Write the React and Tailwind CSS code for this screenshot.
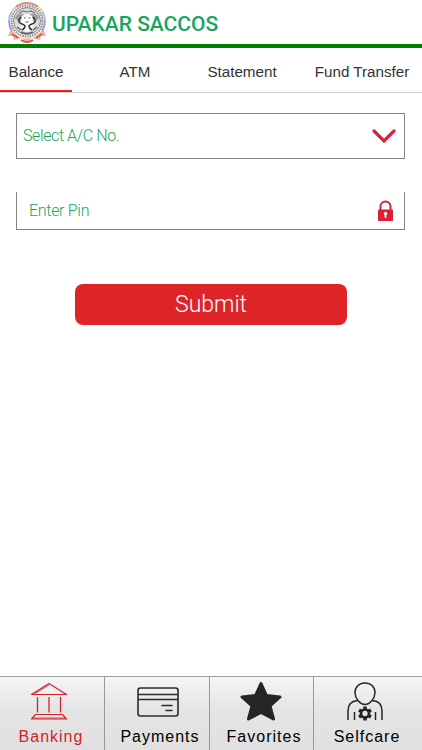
import { useState } from "react"

const tabs = [
  { name: "Balance", className: "w-[72px]" },
  { name: "ATM", className: "w-[126px]" },
  { name: "Statement", className: "w-[88px]" },
  { name: "Fund Transfer", className: "flex-1 pl-4" },
]

function Logo() {
  return (
    <svg width="40" height="43" viewBox="0 0 40 43" fill="none">
      {/* Ribbon */}
      <path d="M4 27L1 35l5 0 1 4 8-2 5 5 5-5 8 2 1-4 5 0-3-8z" fill="#f3b3a2" />
      <path d="M5 33l6 4M35 33l-6 4M14 39q6 4 12 0" stroke="#d25c4c" strokeWidth="1.800" />
      {/* Rainbow ring */}
      <circle cx="20" cy="20" r="17.500" fill="#f6f4f4" />
      <path d="M5 30A18 18 0 0 1 2 20" stroke="#a59ae6" strokeWidth="2" />
      <path d="M2 20A18 18 0 0 1 4.500 11" stroke="#9fc3e6" strokeWidth="2" />
      <path d="M4.500 11A18 18 0 0 1 9 5.700" stroke="#f3cf93" strokeWidth="2" />
      <path d="M9 5.700A18 18 0 0 1 31 5.700" stroke="#dc8b80" strokeWidth="2" />
      <path d="M31 5.700A18 18 0 0 1 35.500 11" stroke="#f3cf93" strokeWidth="2" />
      <path d="M35.500 11A18 18 0 0 1 38 20" stroke="#9fc3e6" strokeWidth="2" />
      <path d="M38 20A18 18 0 0 1 35 30" stroke="#a59ae6" strokeWidth="2" />
      <circle cx="20" cy="20" r="15.500" stroke="#8f8989" strokeWidth="2" strokeDasharray="1.500 1" />
      <circle cx="20" cy="20" r="13.500" fill="#dcdada" stroke="#6c6868" strokeWidth="0.800" />
      {/* Emblem */}
      <path d="M8 17q2-6 8-4l4 3 4-3q6-2 8 4l-5 5H13z" fill="#a09d9d" />
      <path d="M12 12l4-2 4 1 4-1 4 2" stroke="#777" strokeWidth="1.200" />
      <path d="M15 15q5-4 10 0l2 8q-1 7-7 8-6-1-7-8z" fill="#fafafa" />
      <path d="M14 16q-5 5 1 7t0 6M26 16q5 5-1 7t0 6" stroke="#333" strokeWidth="1.600" />
      <path d="M17 17h1.500M21.500 17h1.500M18.500 21h3" stroke="#555" strokeWidth="1.200" />
      <path d="M10 26l4 3M30 26l-4 3M14 31q6 3 12 0" stroke="#666" strokeWidth="1.500" />
    </svg>
  )
}

function BankIcon() {
  return (
    <svg width="38" height="38" viewBox="0 0 38 38" fill="none" stroke="#d2222a" strokeWidth="1.200" strokeLinejoin="round">
      <path d="M1.500 12.500L19 1.500l17.500 11z" />
      <path d="M5 11.500L19 3" strokeWidth="0.800" />
      <path d="M7.500 15v15.500M19 15v15.500M30.500 15v15.500" strokeWidth="1.300" />
      <path d="M5.500 32.500h27l4 4.500h-35z" />
      <path d="M2.500 36h33" strokeWidth="0.800" />
    </svg>
  )
}

function CardIcon() {
  return (
    <svg width="42" height="30" viewBox="0 0 42 30" fill="none" stroke="#2c2a2b" strokeWidth="1.600">
      <rect x="1" y="1" width="40" height="28" rx="2.500" />
      <path d="M1 7.500h40M1 12.500h40" />
      <path d="M25 18.500h10M29 23.500h6" strokeLinecap="round" />
    </svg>
  )
}

function StarIcon() {
  return (
    <svg width="42" height="40" viewBox="0 0 42 40" fill="#262425" stroke="#262425" strokeWidth="3" strokeLinejoin="round">
      <path d="M21 2.500L26.500 14.500 40 16 30 25 33.500 38 21 31.500 8.500 38 12 25 2 16 15.500 14.500z" />
    </svg>
  )
}

function SelfcareIcon() {
  return (
    <svg width="36" height="39" viewBox="0 0 36 39" fill="none" stroke="#262425" strokeWidth="1.500">
      <path d="M18 1C12 1 8 5 8 10.500 8 16.500 13 22.500 18 22.500S28 16.500 28 10.500C28 5 24 1 18 1z" />
      <path d="M10.500 18.500C4.500 19 1 23 1 29v9M25.500 18.500C31.500 19 35 23 35 29v9M7.500 30v8M28.500 30v8" />
      <circle cx="18" cy="31.500" r="4" strokeWidth="2.700" />
      <path d="M18 24.500v3M18 35.500v3M12 28l2.600 1.500M21.400 33.500l2.600 1.500M12 35l2.600-1.500M21.400 29.500l2.600-1.500" strokeWidth="3.500" />
    </svg>
  )
}

const navItems = [
  { name: "Banking", icon: <BankIcon />, className: "w-[105px] pr-0.5 text-[#d2222a]", iconClassName: "pr-[5px] pb-1" },
  { name: "Payments", icon: <CardIcon />, className: "w-[105px] pl-1.5 text-black", iconClassName: "pr-[5px] pb-0.5" },
  { name: "Favorites", icon: <StarIcon />, className: "w-[104px] pl-[5px] text-black", iconClassName: "pr-[7px] pb-1" },
  { name: "Selfcare", icon: <SelfcareIcon />, className: "flex-1 pr-0.5 text-black", iconClassName: "pr-[5px] pb-[3px]" },
]

export default function App() {
  const [activeTab, setActiveTab] = useState("Balance")
  const [pin, setPin] = useState("")

  return (
    <div className="flex h-[750px] w-[422px] flex-col overflow-hidden bg-white font-['Liberation_Sans',sans-serif]">
      {/* Header */}
      <header className="flex h-12 items-start gap-[5px] border-b-4 border-[#008000] pl-[7px] pt-px">
        <Logo />
        <h1 className="pt-[9px] font-['Roboto',sans-serif] text-[21px] leading-7 font-medium text-[#17a55b]">
          UPAKAR SACCOS
        </h1>
      </header>

      {/* Tabs */}
      <nav className="flex h-[45px] border-b border-[#cfcfcf]">
        {tabs.map((tab) => (
          <button
            key={tab.name}
            onClick={() => setActiveTab(tab.name)}
            className={`${tab.className} h-11 border-b-2 pt-[7px] text-[15.200px] whitespace-nowrap text-[#333] ${
              activeTab === tab.name ? "border-[#e8201f]" : "border-transparent"
            }`}
          >
            {tab.name}
          </button>
        ))}
      </nav>

      {/* Balance Form */}
      <form
        onSubmit={(e) => e.preventDefault()}
        className="flex flex-1 flex-col px-[17px] pt-5 font-['Roboto',sans-serif] font-light"
      >
        <button
          type="button"
          className="-ml-px flex h-[46px] w-[389px] items-center justify-between border border-[#858585] pr-2 pl-1.5 text-base tracking-[-0.400px] text-[#17a55b]"
        >
          Select A/C No.
          <svg width="24" height="15" viewBox="0 0 24 15" fill="none" stroke="#d9243c" strokeWidth="3.200" strokeLinecap="round">
            <path d="M2 2l10 10L22 2" />
          </svg>
        </button>

        <div className="mt-[33px] -ml-px flex h-[38px] w-[389px] items-center justify-between border border-t-0 border-[#858585] pr-[11px] pl-3">
          <input
            type="password"
            value={pin}
            onChange={(e) => setPin(e.target.value)}
            placeholder="Enter Pin"
            className="w-40 text-base tracking-[-0.300px] text-[#17a55b] outline-none placeholder:text-[#17a55b]"
          />
          <svg width="15" height="21" viewBox="0 0 15 21">
            <path d="M2.500 10V6.500a5 5 0 0 1 10 0V10" fill="none" stroke="#dc2037" strokeWidth="2" />
            <rect y="9.500" width="15" height="11.500" rx="0.700" fill="#dc2037" />
            <circle cx="7.500" cy="13.500" r="1.700" fill="#fff" />
            <path d="M6.700 14h1.600v4H6.700z" fill="#fff" />
          </svg>
        </div>

        <button
          type="submit"
          className="mt-[54px] ml-[58px] h-[41px] w-[272px] rounded-lg bg-[#de2428] text-[23px] leading-none text-white"
        >
          Submit
        </button>
      </form>

      {/* Bottom Navigation */}
      <nav className="flex h-[74px] border-t border-[#a0a0a0] bg-linear-to-b from-[#f5f5f5] via-[#e5e5e5] via-45% to-[#e0e0e0]">
        {navItems.map((item) => (
          <button
            key={item.name}
            className={`${item.className} flex flex-col items-center border-r border-[#999] pt-px text-base leading-5 tracking-[1px] last:border-r-0`}
          >
            <span className={`${item.iconClassName} flex h-[49px] items-center`}>{item.icon}</span>
            {item.name}
          </button>
        ))}
      </nav>
    </div>
  )
}
